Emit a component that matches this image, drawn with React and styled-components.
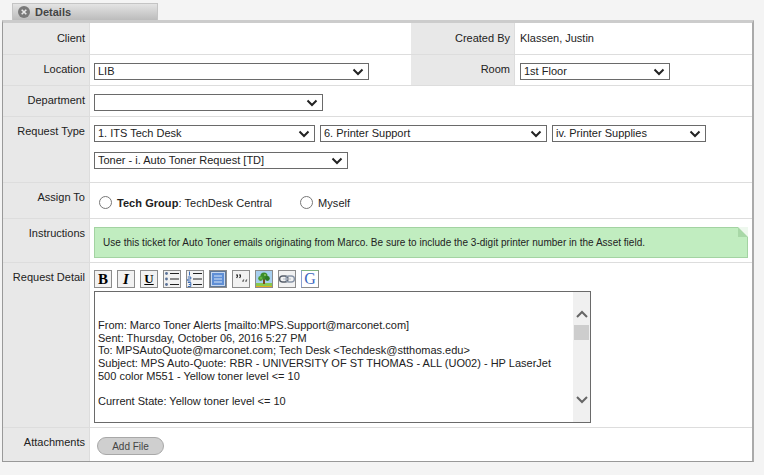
import React from 'react';
import styled, { createGlobalStyle } from 'styled-components';

const chevron = "url(\"data:image/svg+xml,%3Csvg xmlns='http://www.w3.org/2000/svg' width='12' height='8'%3E%3Cpath d='M1.5 1.5 L6 6 L10.5 1.5' fill='none' stroke='%23222' stroke-width='2'/%3E%3C/svg%3E\")";

const Global = createGlobalStyle`
  html, body {
    margin: 0;
    height: 475px;
    overflow: hidden;
    background: #f4f4f4;
    font-family: "Liberation Sans", Arial, sans-serif;
    font-size: 11px;
    color: #222;
  }
`;

const Page = styled.div`
  padding: 3px 9px 0 2px;
`;

const TabBar = styled.div`
  display: flex;
  padding-left: 10px;
  height: 17px;
`;

const Tab = styled.div`
  width: 146px;
  display: flex;
  align-items: center;
  gap: 5px;
  padding-left: 5px;
  box-sizing: border-box;
  border: 1px solid #c4c4c4;
  border-bottom: 0;
  background: linear-gradient(#e4e4e4, #bcbcbc);
  font-weight: bold;
  color: #444;
`;

const Panel = styled.div`
  width: 752px;
  box-sizing: border-box;
  background: #fff;
  border-top: 3px solid #ccc;
  border-left: 1px solid #999;
  border-right: 2px solid #aaa;
  border-bottom: 1px solid #999;
`;

const Row = styled.div`
  display: flex;
  height: ${p => p.$h}px;
  box-sizing: border-box;
  border-bottom: ${p => (p.$last ? 0 : '1px solid #ddd')};
`;

const Label = styled.div`
  flex: none;
  width: ${p => p.$w || 87}px;
  box-sizing: border-box;
  padding: 8px 4px 0 0;
  text-align: right;
  background: #e8e8e8;
  border-right: 1px solid #ddd;
  color: #222;
  line-height: 13px;
`;

const MiddleLabel = styled(Label)`
  padding-top: 9px;
`;

const Field = styled.div`
  flex: ${p => (p.$w ? 'none' : 1)};
  width: ${p => (p.$w ? `${p.$w}px` : 'auto')};
  box-sizing: border-box;
  padding: ${p => p.$pad || '8px 4px 0'};
  min-width: 0;
`;

const PlainText = styled.div`
  padding-top: 1px;
  line-height: 13px;
`;

const Select = styled.select`
  display: block;
  appearance: none;
  width: ${p => p.$w}px;
  height: 17px;
  box-sizing: border-box;
  border: 1px solid #6a6a6a;
  border-radius: 0;
  background: #fff ${chevron} no-repeat right 4px center;
  padding: 0 18px 1px 3px;
  font: 11px "Liberation Sans", Arial, sans-serif;
  color: #222;
`;

const SelectRow = styled.div`
  display: flex;
  flex-wrap: wrap;
  gap: 10px 5px;
`;

const RadioRow = styled.div`
  display: flex;
  align-items: center;
  padding: 5px 0 0 5px;
`;

const RadioLabel = styled.label`
  display: flex;
  align-items: center;
  gap: 5px;
  letter-spacing: 0.05px;
  margin-right: ${p => p.$gap || 0}px;
`;

const Radio = styled.input`
  appearance: none;
  width: 13px;
  height: 13px;
  margin: 0;
  border: 1px solid #777;
  border-radius: 50%;
  background: #fff;
`;

const Note = styled.div`
  position: relative;
  height: 31px;
  box-sizing: border-box;
  width: 654px;
  padding-left: 8px;
  display: flex;
  align-items: center;
  background: #c1edc0;
  border: 1px solid #a3d3a2;
  color: #222;
  font-size: 10px;
  letter-spacing: 0.02px;
`;

const NoteFold = styled.span`
  position: absolute;
  top: -1px;
  right: -1px;
  width: 0;
  height: 0;
  border-style: solid;
  border-width: 0 10px 10px 0;
  border-color: transparent #eef8ee #a8d8a7 transparent;
`;

const Toolbar = styled.div`
  display: flex;
  gap: 5px;
`;

const ToolBtn = styled.div`
  width: 18px;
  height: 18px;
  box-sizing: border-box;
  display: flex;
  align-items: center;
  justify-content: center;
  border: 1px solid #8c8c8c;
  background: #f2f2f2;
  color: #000;
  font: ${p => p.$face || '900 15px "Liberation Serif", serif'};
  text-decoration: ${p => (p.$under ? 'underline' : 'none')};
`;

const Editor = styled.div`
  display: flex;
  width: 497px;
  height: 132px;
  margin-top: 3px;
  box-sizing: border-box;
  border: 1px solid #6a6a6a;
  background: #fff;
`;

const EditorText = styled.div`
  flex: 1;
  padding: 27px 0 0 3px;
  line-height: 12.7px;
  white-space: pre-line;
  color: #222;
  overflow: hidden;
`;

const Scrollbar = styled.div`
  flex: none;
  width: 17px;
  display: flex;
  flex-direction: column;
  align-items: center;
  background: #f0f0f0;
  padding-top: 18px;
`;

const ScrollThumb = styled.div`
  width: 15px;
  height: 15px;
  margin-top: 7px;
  background: #cdcdcd;
`;

const ScrollDown = styled.div`
  margin-top: 56px;
  display: flex;
`;

const AddFile = styled.button`
  display: block;
  width: 67px;
  height: 18px;
  margin-left: 3px;
  padding: 0;
  border: 1px solid #a8a8a8;
  border-radius: 9px;
  background: #cfcfcf;
  color: #444;
  font: 10px "Liberation Sans", Arial, sans-serif;
`;

const GoogleBtn = styled(ToolBtn)`
  border-color: #7fb27f #8c8c8c #8c8c8c #8ca0d0;
  background: #fff;
  color: #3c68c0;
  font: 16px "Liberation Serif", serif;
`;

const CloseIcon = () => (
  <svg width="12" height="12" viewBox="0 0 12 12">
    <circle cx="6" cy="6" r="6" fill="#7a7a7a" />
    <path d="M3.7 3.7 L8.3 8.3 M8.3 3.7 L3.7 8.3" stroke="#e8e8e8" strokeWidth="1.6" />
  </svg>
);

const BulletIcon = () => (
  <svg width="16" height="16" viewBox="0 0 16 16">
    <g fill="#5a7298">
      <circle cx="2.5" cy="2.5" r="1.4" />
      <circle cx="2.5" cy="8" r="1.4" />
      <circle cx="2.5" cy="13.5" r="1.4" />
    </g>
    <path d="M6 2.5h9M6 8h9M6 13.5h9" stroke="#222" />
  </svg>
);

const NumberIcon = () => (
  <svg width="16" height="16" viewBox="0 0 16 16">
    <path d="M2.5 .5v4M.8 6h3v2h-3v2h3M.8 11.5h3v4h-3M1.8 13.5h2" stroke="#3c6cb4" fill="none" />
    <path d="M6 2.5h9M6 8h9M6 13.5h9" stroke="#222" />
  </svg>
);

const BlockIcon = () => (
  <svg width="16" height="16" viewBox="0 0 16 16">
    <rect x="0.5" y="0.5" width="15" height="15" fill="#c6d8f0" stroke="#5f7898" />
    <rect x="2" y="2" width="12" height="12" fill="#5f8fd6" />
    <path d="M4 5h8M4 8h8M4 11h8" stroke="#d8e6f8" />
  </svg>
);

const QuoteIcon = () => (
  <svg width="16" height="16" viewBox="0 0 16 16">
    <path d="M3 4h1.4v1.6L3.6 7M6 4h1.4v1.6L6.6 7" stroke="#222" strokeWidth="1.1" fill="none" />
    <path d="M10 11V9.8L11 8.5M13 11V9.8L14 8.5" stroke="#555" strokeWidth="1.1" fill="none" />
  </svg>
);

const ImageIcon = () => (
  <svg width="16" height="16" viewBox="0 0 16 16">
    <rect width="16" height="16" fill="#a8d0f0" />
    <rect y="12" width="16" height="4" fill="#86c850" />
    <rect x="7" y="8" width="2" height="5" fill="#7a4a20" />
    <circle cx="8" cy="5" r="3.6" fill="#3c8c2c" />
    <circle cx="4.6" cy="7.5" r="2.4" fill="#4c9c34" />
    <circle cx="11.4" cy="7.5" r="2.4" fill="#2e7a24" />
    <circle cx="9" cy="4" r="1" fill="#8ccc5c" />
    <circle cx="5" cy="7" r="0.8" fill="#8ccc5c" />
    <path d="M0 15.5h16" stroke="#e0b020" />
  </svg>
);

const LinkIcon = () => (
  <svg width="16" height="16" viewBox="0 0 16 16">
    <rect x="0.6" y="5" width="8.4" height="6" rx="3" fill="none" stroke="#58606c" strokeWidth="1.4" />
    <rect x="7" y="5" width="8.4" height="6" rx="3" fill="none" stroke="#8a96a8" strokeWidth="1.4" />
    <path d="M4 8h8" stroke="#b4bcc8" />
  </svg>
);

const Chevron = ({ up }) => (
  <svg width="12" height="8" viewBox="0 0 12 8">
    <path d={up ? 'M1 7 L6 2 L11 7' : 'M1 1 L6 6 L11 1'} fill="none" stroke="#666" strokeWidth="2" />
  </svg>
);

const detail = `From: Marco Toner Alerts [mailto:MPS.Support@marconet.com]
Sent: Thursday, October 06, 2016 5:27 PM
To: MPSAutoQuote@marconet.com; Tech Desk <Techdesk@stthomas.edu>
Subject: MPS Auto-Quote: RBR - UNIVERSITY OF ST THOMAS - ALL (UO02) - HP LaserJet
500 color M551 - Yellow toner level <= 10

Current State: Yellow toner level <= 10`;

export default function App() {
  return (
    <Page>
      <Global />
      <TabBar>
        <Tab><CloseIcon />Details</Tab>
      </TabBar>
      <Panel>
        <Row $h={32}>
          <MiddleLabel>Client</MiddleLabel>
          <Field $w={321} />
          <MiddleLabel $w={104}>Created By</MiddleLabel>
          <Field $pad="8px 5px 0"><PlainText>Klassen, Justin</PlainText></Field>
        </Row>
        <Row $h={31}>
          <Label>Location</Label>
          <Field $w={321}>
            <Select $w={275} defaultValue="LIB"><option>LIB</option></Select>
          </Field>
          <Label $w={104}>Room</Label>
          <Field $pad="8px 5px 0">
            <Select $w={150} defaultValue="1st Floor"><option>1st Floor</option></Select>
          </Field>
        </Row>
        <Row $h={31}>
          <Label>Department</Label>
          <Field><Select $w={229}><option></option></Select></Field>
        </Row>
        <Row $h={66}>
          <Label>Request Type</Label>
          <Field>
            <SelectRow>
              <Select $w={221}><option>1. ITS Tech Desk</option></Select>
              <Select $w={227}><option>6. Printer Support</option></Select>
              <Select $w={154}><option>iv. Printer Supplies</option></Select>
              <Select $w={254}><option>Toner - i. Auto Toner Request [TD]</option></Select>
            </SelectRow>
          </Field>
        </Row>
        <Row $h={36}>
          <Label>Assign To</Label>
          <Field>
            <RadioRow>
              <RadioLabel $gap={28}>
                <Radio type="radio" name="assign" />
                <span><b>Tech Group</b>: TechDesk Central</span>
              </RadioLabel>
              <RadioLabel>
                <Radio type="radio" name="assign" />
                Myself
              </RadioLabel>
            </RadioRow>
          </Field>
        </Row>
        <Row $h={44}>
          <Label>Instructions</Label>
          <Field>
            <Note>
              Use this ticket for Auto Toner emails originating from Marco. Be sure to include the 3-digit printer number in the Asset field.
              <NoteFold />
            </Note>
          </Field>
        </Row>
        <Row $h={165}>
          <Label>Request Detail</Label>
          <Field $pad="7px 4px 0">
            <Toolbar>
              <ToolBtn>B</ToolBtn>
              <ToolBtn $face='italic 900 15px "Liberation Serif", serif'>I</ToolBtn>
              <ToolBtn $under $face='900 13px "Liberation Serif", serif'>U</ToolBtn>
              <ToolBtn><BulletIcon /></ToolBtn>
              <ToolBtn><NumberIcon /></ToolBtn>
              <ToolBtn><BlockIcon /></ToolBtn>
              <ToolBtn><QuoteIcon /></ToolBtn>
              <ToolBtn><ImageIcon /></ToolBtn>
              <ToolBtn><LinkIcon /></ToolBtn>
              <GoogleBtn>G</GoogleBtn>
            </Toolbar>
            <Editor>
              <EditorText>{detail}</EditorText>
              <Scrollbar>
                <Chevron up />
                <ScrollThumb />
                <ScrollDown><Chevron /></ScrollDown>
              </Scrollbar>
            </Editor>
          </Field>
        </Row>
        <Row $h={33} $last>
          <Label>Attachments</Label>
          <Field $pad="9px 4px 0"><AddFile>Add File</AddFile></Field>
        </Row>
      </Panel>
    </Page>
  );
}
